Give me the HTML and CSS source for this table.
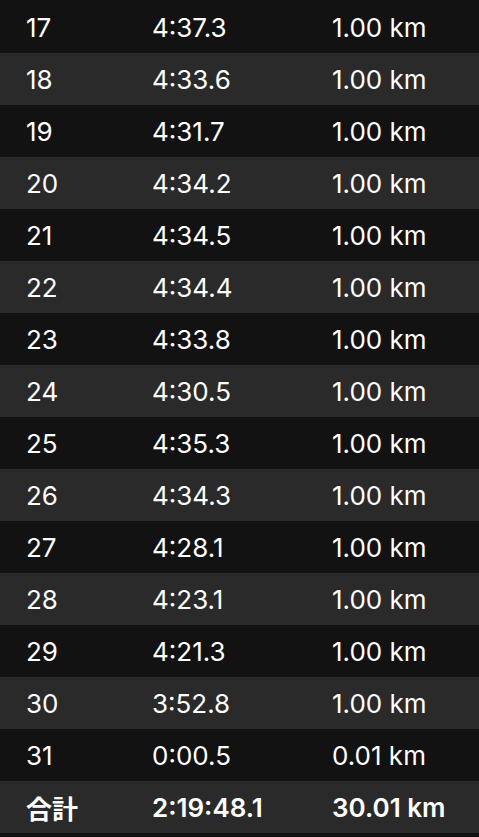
FILE: index.html
```html
<!DOCTYPE html>
<html lang="ja">
<head>
  <meta charset="UTF-8" />
  <meta name="viewport" content="width=device-width, initial-scale=1.0"/>
  <title>ラップ</title>
  <link rel="stylesheet" href="styles.css">
</head>
<body>

<div class="splits">
  <div class="row"><span>17</span><span>4:37.3</span><span>1.00 km</span></div>
  <div class="row"><span>18</span><span>4:33.6</span><span>1.00 km</span></div>
  <div class="row"><span>19</span><span>4:31.7</span><span>1.00 km</span></div>
  <div class="row"><span>20</span><span>4:34.2</span><span>1.00 km</span></div>
  <div class="row"><span>21</span><span>4:34.5</span><span>1.00 km</span></div>
  <div class="row"><span>22</span><span>4:34.4</span><span>1.00 km</span></div>
  <div class="row"><span>23</span><span>4:33.8</span><span>1.00 km</span></div>
  <div class="row"><span>24</span><span>4:30.5</span><span>1.00 km</span></div>
  <div class="row"><span>25</span><span>4:35.3</span><span>1.00 km</span></div>
  <div class="row"><span>26</span><span>4:34.3</span><span>1.00 km</span></div>
  <div class="row"><span>27</span><span>4:28.1</span><span>1.00 km</span></div>
  <div class="row"><span>28</span><span>4:23.1</span><span>1.00 km</span></div>
  <div class="row"><span>29</span><span>4:21.3</span><span>1.00 km</span></div>
  <div class="row"><span>30</span><span>3:52.8</span><span>1.00 km</span></div>
  <div class="row"><span>31</span><span>0:00.5</span><span>0.01 km</span></div>
  <div class="row total"><span>合計</span><span>2:19:48.1</span><span>30.01 km</span></div>
</div>

</body>
</html>
```

FILE: styles.css
```css
body {
  margin: 0;
  padding: 0;
  background: #121212;
  font-family: Inter, "Noto Sans CJK JP", sans-serif;
  color: #ffffff;
}

.splits {
  padding-top: 1px;
}

.row {
  display: grid;
  grid-template-columns: 126px 180px 1fr;
  align-items: center;
  height: 52px;
  padding-left: 26px;
  font-size: 26px;
  background: #121212;
}

.row:nth-child(even) {
  background: #2a2a2a;
}

.row.total {
  font-weight: 600;
}
```
